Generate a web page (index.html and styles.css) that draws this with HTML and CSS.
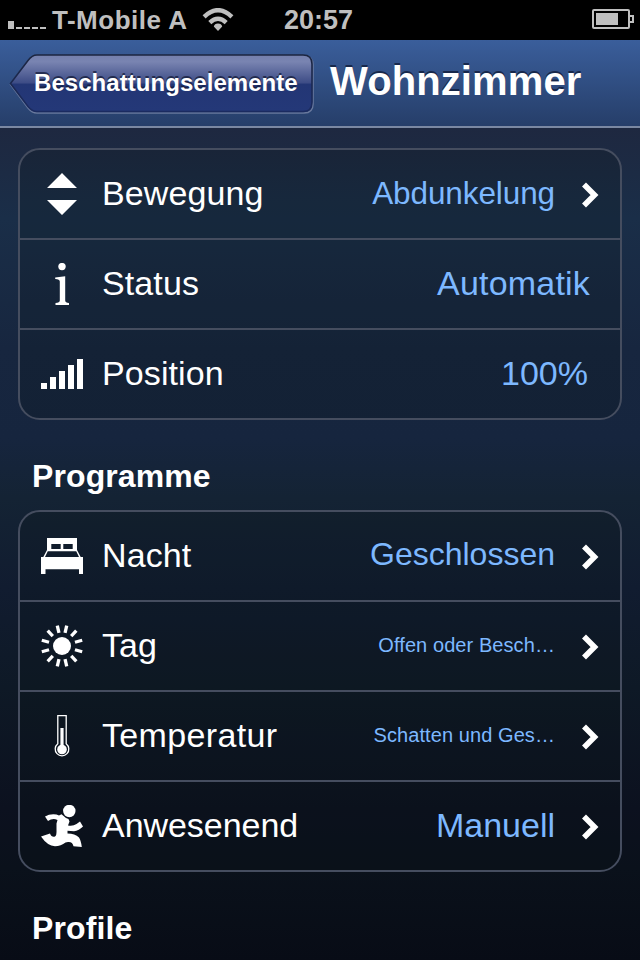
FILE: index.html
```html
<!DOCTYPE html>
<html lang="de">
<head>
<meta charset="utf-8">
<title>Wohnzimmer</title>
<link rel="stylesheet" href="styles.css">
</head>
<body>
<div class="statusbar">
  <svg class="signal" width="38" height="8" viewBox="0 0 38 8" fill="#bfbfbf"><path d="M0 0h6v8H0zM8 6h6v2H8zM16 6h6v2h-6zM24 6h6v2h-6zM32 6h6v2h-6z"/></svg>
  <span class="carrier">T-Mobile A</span>
  <svg class="wifi" width="32" height="24" viewBox="0 0 32 24" fill="none" stroke="#bfbfbf" stroke-width="4.400"><path d="M2.100 8.800Q16-4.400 29.900 8.800M7.800 14.600Q16 7 24.200 14.600"/><path d="M16 23l-4.200-4.600Q12.500 15.500 16 15.500T20.200 18.400z" fill="#bfbfbf" stroke="none"/></svg>
  <span class="time">20:57</span>
  <svg class="battery" width="42" height="20" viewBox="0 0 42 20"><rect x="1" y="1" width="36" height="18" rx="1" fill="none" stroke="#bfbfbf" stroke-width="2"/><path d="M38 7h3v6h-3" fill="none" stroke="#bfbfbf" stroke-width="2"/><path d="M4 4h22v12H4z" fill="#bfbfbf"/></svg>
</div>
<header class="navbar">
  <a class="back">
    <svg class="back-shape" width="306" height="62" viewBox="0 0 306 62">
      <defs>
        <linearGradient id="gloss" x1="0" y1="0" x2="0" y2="1"><stop offset="0" stop-color="#7480ad"/><stop offset=".12" stop-color="#7984b1"/><stop offset=".5" stop-color="#3c4b85"/><stop offset=".51" stop-color="#233675"/><stop offset="1" stop-color="#243878"/></linearGradient>
        <linearGradient id="rim" x1="0" y1="0" x2="0" y2="1"><stop offset="0" stop-color="#1b2540"/><stop offset="1" stop-color="#1b2b60"/></linearGradient>
      </defs>
      <path d="M28 3H295Q304 3 304 12V51Q304 60 295 60H28Q23 60 19 55L1.500 31.500L19 8Q23 3 28 3z" fill="none" stroke="#7483a4" stroke-opacity=".85" stroke-width="1.500"/>
      <path d="M28 2H294Q303 2 303 11V49Q303 58.500 294 58.500H28Q23 58.500 19 53.500L1.500 30.500L19 7.500Q23 2 28 2z" fill="url(#gloss)" stroke="url(#rim)" stroke-width="1.600"/>
    </svg>
    <span class="back-label">Beschattungselemente</span>
  </a>
  <h1 class="title">Wohnzimmer</h1>
</header>
<main class="content">
  <section class="card">
    <div class="row">
      <svg class="icon" viewBox="0 0 42 42"><path d="M21 0l15 15H6zM6 27h30L21 42z"/></svg>
      <span class="label">Bewegung</span><span class="value medium abd">Abdunkelung</span>
      <svg class="chevron" viewBox="0 0 18 26"><path d="M2 2.500L12.500 13 2 23.500"/></svg>
    </div>
    <div class="row">
      <svg class="icon" viewBox="0 0 42 42"><circle cx="21" cy="3.600" r="3.700"/><path d="M14.200 14.400L24.200 13.300V37.500Q24.200 39.600 28 40V42H14.500V40Q18.800 39.600 18.800 37.500V18.500Q18.800 16.200 14.200 16z"/></svg>
      <span class="label">Status</span><span class="value last wide">Automatik</span>
    </div>
    <div class="row">
      <svg class="icon" viewBox="0 0 42 42"><path d="M0 30h6v6H0zM9 24h6v12H9zM18 18h6v18h-6zM27 12h6v24h-6zM36 6h6v30h-6z"/></svg>
      <span class="label">Position</span><span class="value last">100%</span>
    </div>
  </section>
  <h2 class="heading">Programme</h2>
  <section class="card">
    <div class="row">
      <svg class="icon" viewBox="0 0 42 42"><path fill-rule="evenodd" d="M6 3H36V15L39.700 22H42V39H38V34.300H4.500V39H0V22H2.300L6 15zM10.300 9V14H19.700V9zM22.300 9V14H31.700V9zM6.800 16.300L4 22H38L35.200 16.300z"/></svg>
      <span class="label">Nacht</span><span class="value medium raised">Geschlossen</span>
      <svg class="chevron" viewBox="0 0 18 26"><path d="M2 2.500L12.500 13 2 23.500"/></svg>
    </div>
    <div class="row">
      <svg class="icon" viewBox="0 0 42 42"><circle cx="21" cy="21" r="9"/><g stroke="#fff" stroke-width="3.300"><path d="M21 0v7.500" transform="rotate(13 21 21)"/><path d="M21 0v7.500" transform="rotate(43 21 21)"/><path d="M21 0v7.500" transform="rotate(74 21 21)"/><path d="M21 0v7.500" transform="rotate(106 21 21)"/><path d="M21 0v7.500" transform="rotate(137 21 21)"/><path d="M21 0v7.500" transform="rotate(167 21 21)"/><path d="M21 0v7.500" transform="rotate(193 21 21)"/><path d="M21 0v7.500" transform="rotate(223 21 21)"/><path d="M21 0v7.500" transform="rotate(254 21 21)"/><path d="M21 0v7.500" transform="rotate(286 21 21)"/><path d="M21 0v7.500" transform="rotate(317 21 21)"/><path d="M21 0v7.500" transform="rotate(347 21 21)"/></g></svg>
      <span class="label">Tag</span><span class="value small">Offen oder Besch…</span>
      <svg class="chevron" viewBox="0 0 18 26"><path d="M2 2.500L12.500 13 2 23.500"/></svg>
    </div>
    <div class="row">
      <svg class="icon" viewBox="0 0 42 42"><path d="M16.800.7H25.200V28.700A6.800 6.800 0 1 1 16.800 28.700z" fill="none" stroke="#fff" stroke-width="1.300"/><circle cx="21" cy="34.500" r="4.800"/><path d="M19.400 13h3.200v20h-3.200z"/></svg>
      <span class="label temp">Temperatur</span><span class="value small">Schatten und Ges…</span>
      <svg class="chevron" viewBox="0 0 18 26"><path d="M2 2.500L12.500 13 2 23.500"/></svg>
    </div>
    <div class="row">
      <svg class="icon" viewBox="0 0 42 42"><circle cx="28.300" cy="6" r="6.200"/><path d="M4 11.500Q9 8.500 15.500 9.500L18 10.500 20.500 9.200 25 13 27.500 14 28.500 16.500 27 20.500Q32 21.500 35.500 19L39 16.500 42 21.500Q38 25.500 33 26.200L26.500 25.800V28.500Q34 28.500 38 32.500Q40 35.500 40.800 42L32.500 41.200Q31.500 36.500 27 37L24.500 37.500Q20 41 14 41.200Q6.500 41 0 31.500L9 28.500Q10.500 32.500 14 31.500Q15.800 30.500 15.500 25L15.500 18.500 16.500 15 14.500 14.200Q10.500 13.500 7 16z"/></svg>
      <span class="label anw">Anwesenend</span><span class="value">Manuell</span>
      <svg class="chevron" viewBox="0 0 18 26"><path d="M2 2.500L12.500 13 2 23.500"/></svg>
    </div>
  </section>
  <h2 class="heading">Profile</h2>
</main>
</body>
</html>
```
FILE: styles.css
```css
* { box-sizing: border-box; }
body {
  margin: 0;
  width: 640px;
  height: 960px;
  overflow: hidden;
  display: flex;
  flex-direction: column;
  background: #080c16;
  color: #fff;
  font-family: "Liberation Sans", Arial, sans-serif;
}
svg { display: block; flex: none; }
.statusbar {
  height: 40px;
  flex: none;
  display: flex;
  align-items: flex-start;
  padding: 0 6px 0 8px;
  background: #000;
  color: #bfbfbf;
  font-weight: bold;
  line-height: 40px;
}
.signal { margin-top: 21px; }
.carrier { width: 135px; margin-left: 6px; font-size: 26px; letter-spacing: .5px; white-space: nowrap; }
.wifi { margin: 8px 0 0 15px; }
.time { margin-left: 50px; font-size: 27px; }
.battery { margin: 9px 0 0 auto; }
.navbar {
  height: 88px;
  flex: none;
  display: flex;
  padding: 13px 0 0 9px;
  background: linear-gradient(#3a5e9b, #263e69);
  border-bottom: 2px solid #7b88a2;
}
.back { display: grid; width: 306px; height: 62px; }
.back-shape, .back-label { grid-area: 1 / 1; }
.back-label {
  padding-left: 25px;
  font-size: 24px;
  font-weight: bold;
  letter-spacing: .05px;
  line-height: 59px;
  white-space: nowrap;
  text-shadow: 0 -2px 0 rgba(15, 22, 50, .7);
}
.title {
  margin: 0 0 0 15px;
  font-size: 40px;
  letter-spacing: .1px;
  line-height: 56px;
  text-shadow: 0 -2px 0 rgba(12, 22, 48, .7);
}
.content {
  flex: 1;
  padding: 20px 18px 0;
  background: linear-gradient(#1e2840 0, #1a2e48 90px, #17263f 220px, #16253e 310px, #142334 370px, #111c30 460px, #0e1926 560px, #0c111f 680px, #0a111b 740px, #080c16 832px);
}
.card {
  border: 2px solid #454d5f;
  border-radius: 22px;
  background: rgba(12, 20, 20, .2);
}
.row {
  display: flex;
  align-items: center;
  height: 90px;
  padding: 0 20px 0 21px;
  border-bottom: 2px solid #454d5f;
}
.row:last-child { height: 88px; border-bottom: 0; }
.icon { width: 42px; height: 42px; fill: #fff; }
.label { margin: -2px 0 0 19px; font-size: 34px; letter-spacing: .1px; line-height: 40px; }
.temp { letter-spacing: .35px; }
.anw { letter-spacing: -.05px; }
.value {
  margin: -2px 27px 0 auto;
  color: #7db8ff;
  font-size: 34px;
  line-height: 40px;
  white-space: nowrap;
}
.value.last { margin-right: 12px; }
.value.wide { margin-right: 10px; letter-spacing: .2px; }
.medium { font-size: 32px; }
.abd { font-size: 31.5px; letter-spacing: -.1px; }
.raised { margin-top: -4px; }
.small { font-size: 20px; letter-spacing: .08px; }
.chevron {
  width: 18px;
  height: 26px;
  margin-top: 2px;
  fill: none;
  stroke: #fff;
  stroke-width: 5.6;
}
.heading {
  margin: 40px 0 18px 14px;
  font-size: 32px;
  letter-spacing: .1px;
  line-height: 32px;
}
```
